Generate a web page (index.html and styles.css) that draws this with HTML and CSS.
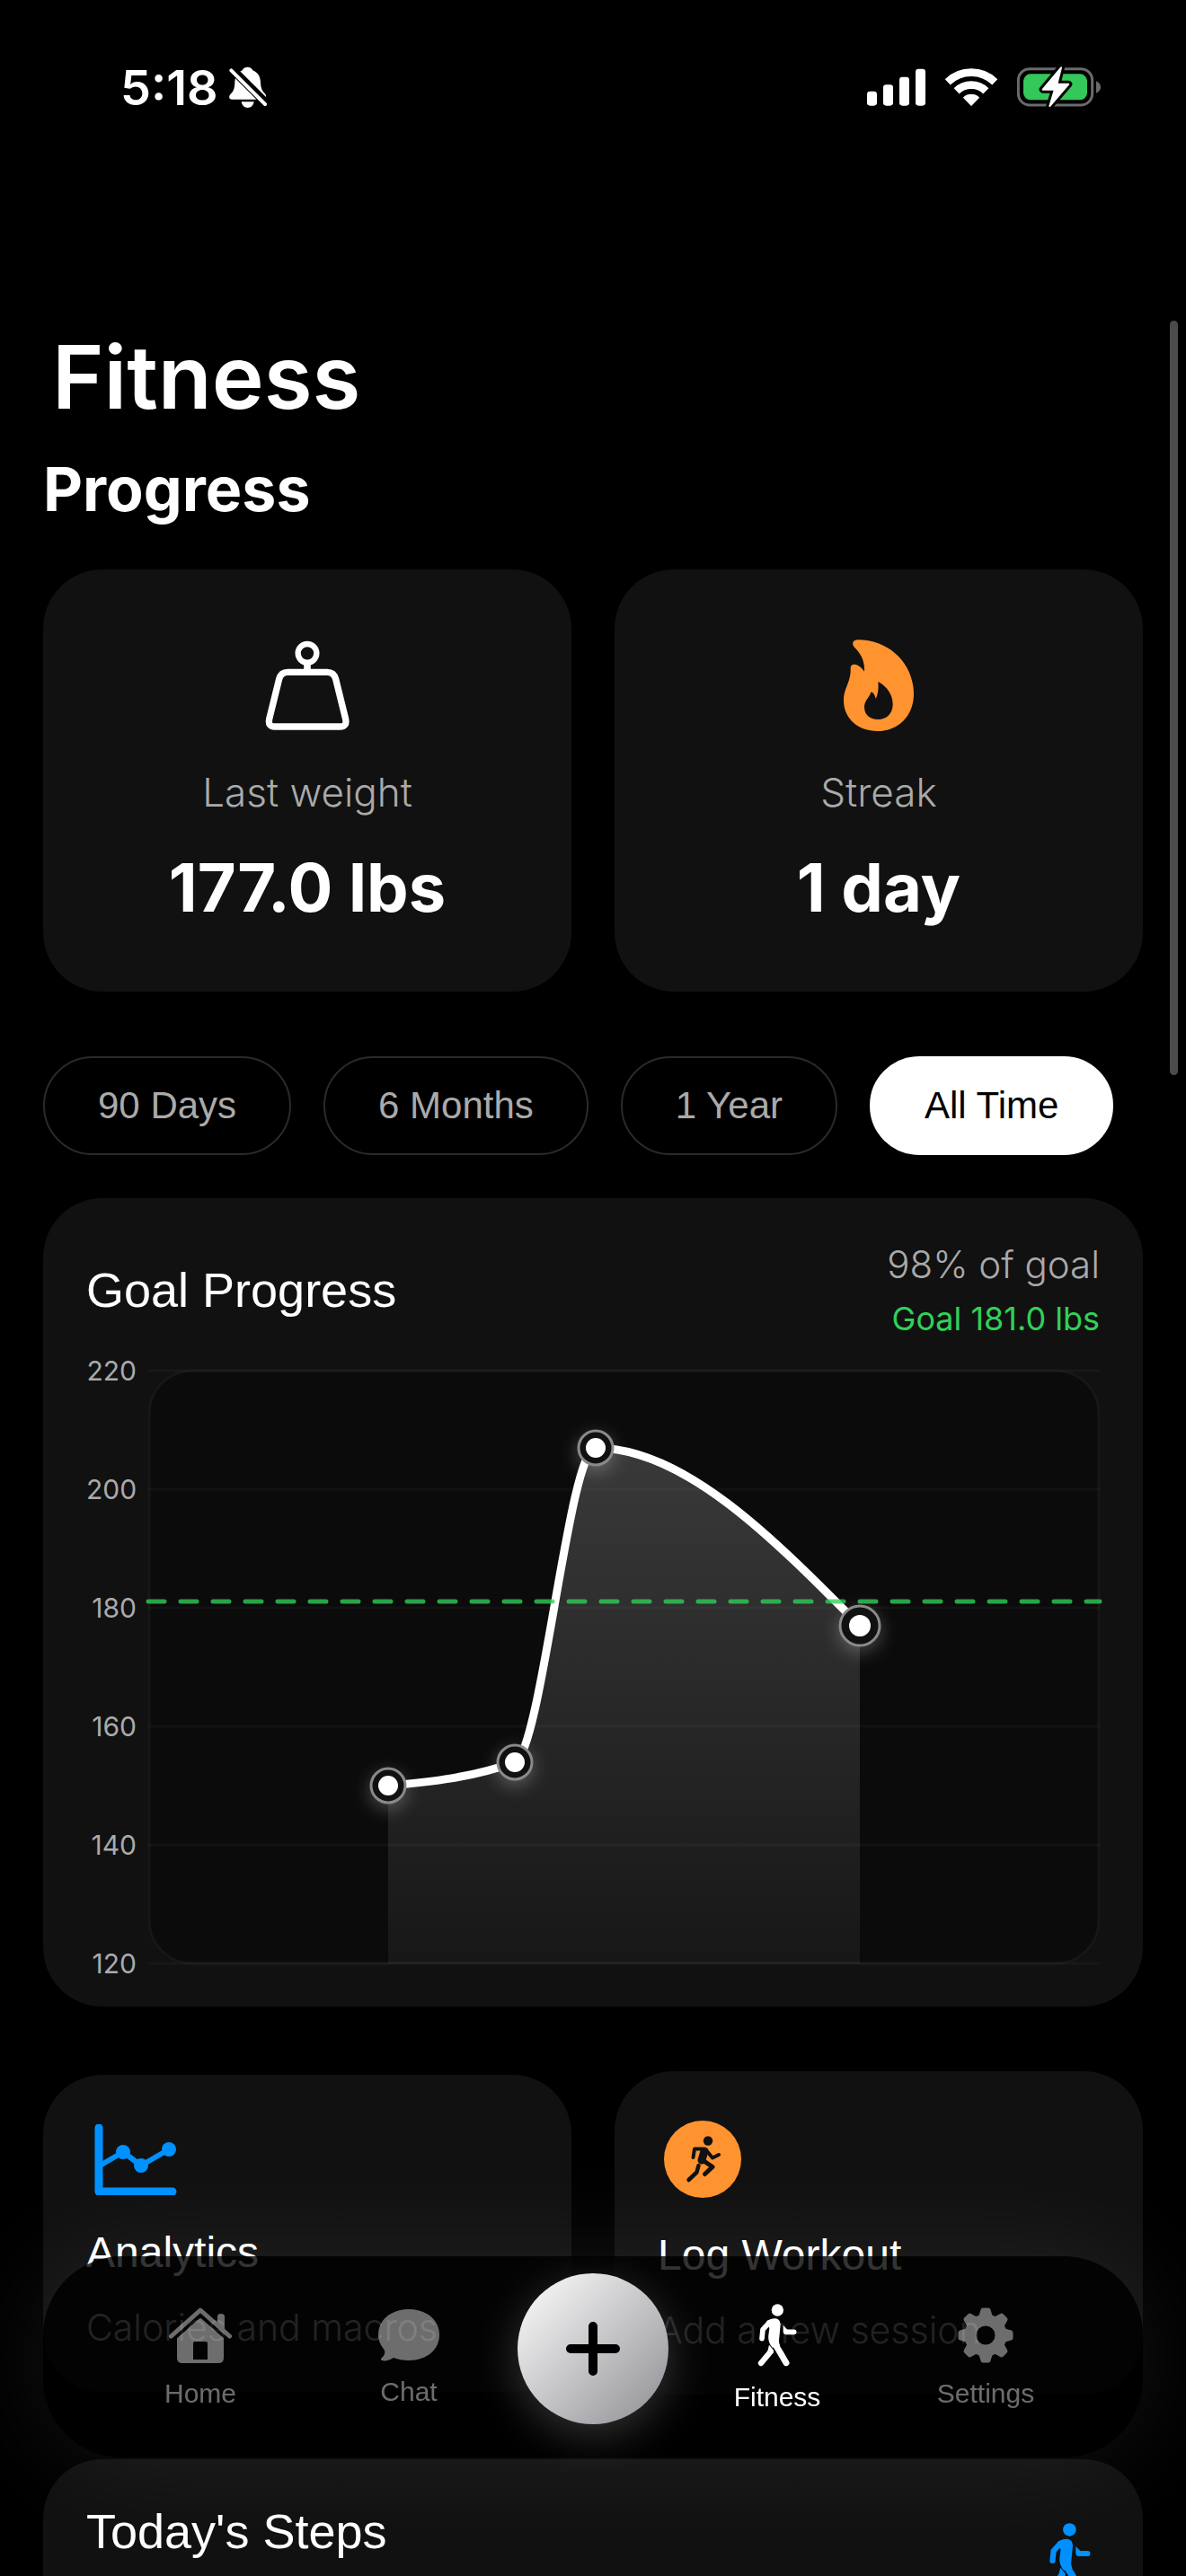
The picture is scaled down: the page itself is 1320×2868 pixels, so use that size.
FILE: index.html
```html
<!DOCTYPE html>
<html lang="en">
<head>
    <meta charset="UTF-8">
    <meta name="viewport" content="width=device-width, initial-scale=1.0">
    <title>Fitness</title>
    <link rel="stylesheet" href="styles.css">
</head>
<body>
    <svg class="sprite" aria-hidden="true">
        <symbol id="walk" viewBox="370 74 132 210">
            <g fill="none" stroke="currentColor" stroke-linecap="round" stroke-linejoin="round">
                <path d="M408 138L388 160L385 190" stroke-width="17"/>
                <path d="M427 206L442 230L466 271" stroke-width="21"/>
                <path d="M414 234L382 272" stroke-width="19"/>
                <path d="M467 168H492" stroke-width="17"/>
            </g>
            <path d="M400 133C414 122 446 114 447 144L442 196Q441 204 446 214L420 220Q404 202 407 178L410 156Z" fill="currentColor"/>
            <path d="M409 211L424 229L422 240L404 232Z" fill="currentColor"/>
            <path d="M456 146L470 160L466 177Q455 175 456 164Z" fill="currentColor"/>
            <circle cx="437" cy="95" r="20" fill="currentColor"/>
        </symbol>
    </svg>

    <div class="status-bar">
        <div class="status-left">
            <span class="time">5:18</span>
            <svg width="42" height="46" viewBox="404 105 126 138">
                <path d="M465 107C474 107 481 112 483 118C500 125 508 138 509 158C510 180 515 186 524 196C531 206 526 215 516 215H414C403 215 402 205 408 198C419 187 422 180 423 158C424 138 432 125 448 118C450 112 457 107 465 107Z" fill="#fff"/>
                <path d="M445 223H487C485 236 476 243 466 243C456 243 447 236 445 223Z" fill="#fff"/>
                <path d="M408 108L532 232" stroke="#000" stroke-width="28"/>
                <path d="M411 118L524 231" stroke="#fff" stroke-width="12" stroke-linecap="round"/>
            </svg>
        </div>
        <div class="status-right">
            <svg width="65" height="42" viewBox="192 106 195 126" fill="#fff">
                <rect x="192" y="183" width="33" height="48" rx="10"/>
                <rect x="246" y="161" width="33" height="70" rx="10"/>
                <rect x="300" y="135" width="33" height="96" rx="10"/>
                <rect x="354" y="108" width="33" height="123" rx="10"/>
            </svg>
            <svg width="58" height="42" viewBox="454 106 174 126">
                <g fill="none" stroke="#fff" stroke-width="26">
                    <path d="M462 152A113 113 0 0 1 620 152"/>
                    <path d="M492 182A70 70 0 0 1 590 182"/>
                </g>
                <path d="M541 229L517 204A36 36 0 0 1 565 204Z" fill="#fff" stroke="#fff" stroke-width="5" stroke-linejoin="round"/>
            </svg>
            <svg width="93" height="46" viewBox="696 101 279 138">
                <rect x="700" y="109" width="247" height="121" rx="38" fill="none" stroke="#6b6b6b" stroke-width="9"/>
                <rect x="717" y="126" width="213" height="87" rx="24" fill="#34c759"/>
                <path d="M960 150C980 158 980 182 960 190Z" fill="#6b6b6b"/>
                <path d="M843 105L782 178H822L805 233L868 160H829Z" fill="#fff" stroke="#000" stroke-width="24" stroke-linejoin="round" paint-order="stroke"/>
                <path d="M843 105L782 178H822L805 233L868 160H829Z" fill="#fff" stroke="#fff" stroke-width="6" stroke-linejoin="round"/>
            </svg>
        </div>
    </div>

    <main class="page">
        <h1>Fitness</h1>
        <h2>Progress</h2>

        <section class="stats">
            <div class="card stat">
                <svg width="120" height="120" viewBox="6 0 360 360" fill="none" stroke="#fff">
                    <circle cx="186" cy="82" r="31" stroke-width="19"/>
                    <path d="M186 116V142" stroke-width="23"/>
                    <path d="M121 145H252Q275 145 281 168L314 302Q319 327 296 327H77Q54 327 59 302L92 168Q98 145 121 145Z" stroke-width="22"/>
                </svg>
                <p class="stat-label">Last weight</p>
                <p class="stat-value">177.0 lbs</p>
            </div>
            <div class="card stat">
                <svg width="120" height="120" viewBox="-6 0 360 360">
                    <path d="M103 37C210 36 291 118 291 218C291 292 238 342 170 342C106 342 57 300 57 240C57 195 82 180 80 132C80 112 108 116 126 143C128 106 112 80 93 62C82 50 88 38 103 37Z" fill="#ff9330"/>
                    <path d="M172 177C202 192 221 222 221 252C221 284 200 303 172 303C144 303 126 287 126 262C126 240 142 231 149 211C156 214 162 223 164 234C172 219 174 198 172 177Z" fill="#111"/>
                </svg>
                <p class="stat-label">Streak</p>
                <p class="stat-value">1 day</p>
            </div>
        </section>

        <div class="ranges">
            <button>90 Days</button>
            <button>6 Months</button>
            <button>1 Year</button>
            <button class="active">All Time</button>
        </div>

        <section class="card goal">
            <div class="goal-header">
                <h3>Goal Progress</h3>
                <div class="goal-info">
                    <p class="goal-percent">98% of goal</p>
                    <p class="goal-target">Goal 181.0 lbs</p>
                </div>
            </div>
            <div class="chart">
                <div class="axis">
                    <span>220</span>
                    <span>200</span>
                    <span>180</span>
                    <span>160</span>
                    <span>140</span>
                    <span>120</span>
                </div>
                <!-- 6.6 units per pound, 120 lbs at the bottom -->
                <svg class="plot" viewBox="0 0 1059 660">
                    <defs>
                        <linearGradient id="area" x1="0" y1="0" x2="0" y2="1">
                            <stop offset="0" stop-color="#fff" stop-opacity=".19"/>
                            <stop offset="1" stop-color="#fff" stop-opacity=".05"/>
                        </linearGradient>
                    </defs>
                    <rect class="plot-bg" x="1" y="0" width="1057" height="660" rx="48"/>
                    <path class="grid" d="M0 0H1059M0 132H1059M0 264H1059M0 396H1059M0 528H1059M0 660H1059"/>
                    <path d="M267 462C314 458 361 453 408 436C438 424 468 86 498 86C596 86 694 185 792 284V660H267Z" fill="url(#area)"/>
                    <path class="line" d="M267 462C314 458 361 453 408 436C438 424 468 86 498 86C596 86 694 185 792 284"/>
                    <path class="goal-line" d="M0 257H1059"/>
                    <g class="points">
                        <circle class="ring" cx="267" cy="462" r="19"/>
                        <circle class="ring" cx="408" cy="436" r="19"/>
                        <circle class="ring" cx="498" cy="86" r="19"/>
                        <circle class="ring" cx="792" cy="284" r="22"/>
                    </g>
                    <g fill="#fff">
                        <circle cx="267" cy="462" r="11"/>
                        <circle cx="408" cy="436" r="11"/>
                        <circle cx="498" cy="86" r="11"/>
                        <circle cx="792" cy="284" r="12"/>
                    </g>
                </svg>
            </div>
        </section>

        <section class="actions">
            <div class="card action">
                <svg width="104" height="79" viewBox="0 0 104 79">
                    <g fill="none" stroke="#0091ff" stroke-linecap="round" stroke-linejoin="round">
                        <path d="M14 4V75H96" stroke-width="9"/>
                        <path d="M17 45L41 31L61 46L92 28" stroke-width="6"/>
                    </g>
                    <g fill="#0091ff">
                        <circle cx="41" cy="31" r="8"/>
                        <circle cx="61" cy="46" r="8"/>
                        <circle cx="92" cy="28" r="8"/>
                    </g>
                </svg>
                <h4>Analytics</h4>
                <p>Calories and macros</p>
            </div>
            <div class="card action">
                <svg width="100" height="86" viewBox="-7 0 100 86">
                    <circle cx="43" cy="43" r="43" fill="#ff9330"/>
                    <g fill="none" stroke="#111" stroke-linecap="round" stroke-linejoin="round">
                        <path d="M43 31.500H34L32.500 41" stroke-width="4"/>
                        <path d="M47 33L54 41.500L61 38" stroke-width="4"/>
                        <path d="M45 34L42 44" stroke-width="9"/>
                        <path d="M43 44L54 51.500L45.500 59.500" stroke-width="5"/>
                        <path d="M38.500 50L36.500 57.500L27.500 66" stroke-width="4.500"/>
                    </g>
                    <circle cx="49" cy="22.500" r="5.200" fill="#111"/>
                </svg>
                <h4>Log Workout</h4>
                <p>Add a new session</p>
            </div>
        </section>

        <section class="card steps">
            <h3>Today's Steps</h3>
            <svg class="steps-icon" width="48" height="78"><use href="#walk"/></svg>
        </section>
    </main>

    <div class="scroll-indicator"></div>

    <nav class="tab-bar">
        <a class="tab" href="#">
            <svg width="70" height="62" viewBox="0 0 70 62">
                <path d="M2.500 32L35 3L67.500 32" fill="none" stroke="currentColor" stroke-width="5" stroke-linecap="round" stroke-linejoin="round"/>
                <path d="M54 18V10Q54 7 58 7Q62 7 62 10V25Z" fill="currentColor"/>
                <path fill-rule="evenodd" d="M9 34L33 13Q35 11 37 13L61 34V56Q61 62 55 62H15Q9 62 9 56ZM29 38Q27 38 27 40V58H43V40Q43 38 41 38Z" fill="currentColor"/>
                <path d="M7 34L35 9L63 34" fill="none" stroke="#050505" stroke-width="3"/>
            </svg>
            <span>Home</span>
        </a>
        <a class="tab" href="#">
            <svg width="68" height="58" viewBox="0 0 68 58">
                <path d="M34 0C54 0 68 12 68 28.500C68 45 54 57 34 57C28 57 22 56 17 54C12 57 8 58 4 57C2 56 3 55 5 53C8 49 8 46 5 43C2 39 0 34 0 28.500C0 12 14 0 34 0Z" fill="currentColor"/>
            </svg>
            <span>Chat</span>
        </a>
        <button class="add" aria-label="Add">
            <svg width="60" height="60" viewBox="0 0 60 60">
                <path d="M30 5V55M5 30H55" stroke="#000" stroke-width="10" stroke-linecap="round"/>
            </svg>
        </button>
        <a class="tab active" href="#">
            <svg width="44" height="70"><use href="#walk"/></svg>
            <span>Fitness</span>
        </a>
        <a class="tab" href="#">
            <svg width="62" height="62" viewBox="-31 -31 62 62">
                <defs>
                    <path id="tooth" d="M-8 -20L-5.500 -28.500Q-5 -30.500 -3 -30.500H3Q5 -30.500 5.500 -28.500L8 -20Z"/>
                </defs>
                <g fill="currentColor">
                    <use href="#tooth"/>
                    <use href="#tooth" transform="rotate(45)"/>
                    <use href="#tooth" transform="rotate(90)"/>
                    <use href="#tooth" transform="rotate(135)"/>
                    <use href="#tooth" transform="rotate(180)"/>
                    <use href="#tooth" transform="rotate(225)"/>
                    <use href="#tooth" transform="rotate(270)"/>
                    <use href="#tooth" transform="rotate(315)"/>
                </g>
                <circle r="17" fill="none" stroke="currentColor" stroke-width="13"/>
            </svg>
            <span>Settings</span>
        </a>
    </nav>
</body>
</html>
```
FILE: styles.css
```css
* {
    box-sizing: border-box;
    margin: 0;
    padding: 0;
}
html {
    background: #000;
}
body {
    height: 100vh;
    overflow: hidden;
    background: #000;
    color: #fff;
    font-family: "Liberation Sans", Arial, sans-serif;
}
svg {
    display: block;
    flex-shrink: 0;
}
h3, h4 {
    font-weight: normal;
}
.sprite {
    position: absolute;
    width: 0;
    height: 0;
}

/* status bar */
.status-bar {
    display: flex;
    justify-content: space-between;
    align-items: center;
    height: 194px;
    padding: 0 95px 0 134px;
}
.status-left {
    display: flex;
    align-items: center;
    gap: 12px;
}
.status-right {
    display: flex;
    align-items: center;
    gap: 22px;
}
.time {
    font-family: Inter, sans-serif;
    font-size: 54px;
    font-weight: 600;
}

/* content */
.page {
    padding: 166px 48px 0;
}
h1 {
    padding-left: 10px;
    font-family: Inter, sans-serif;
    font-size: 98px;
    font-weight: 600;
    line-height: 120px;
}
h2 {
    margin: 24px 0 50px;
    font-family: Inter, sans-serif;
    font-size: 68px;
    font-weight: 700;
    line-height: 80px;
}
.card {
    background: #111;
    border-radius: 66px;
}
.stats {
    display: grid;
    grid-template-columns: 1fr 1fr;
    gap: 48px;
}
.stat {
    display: flex;
    flex-direction: column;
    align-items: center;
    height: 470px;
    padding-top: 66px;
    font-family: Inter, sans-serif;
}
.stat-label {
    margin: 37px 0 39px;
    color: #aaa;
    font-size: 44px;
    font-weight: 300;
    line-height: 50px;
}
.stat-value {
    font-size: 74px;
    font-weight: 700;
    line-height: 84px;
}
.ranges {
    display: flex;
    gap: 36px;
    margin: 72px 0 48px;
}
.ranges button {
    height: 110px;
    padding: 0 59px;
    border: 2px solid #2a2a2a;
    border-radius: 55px;
    background: #000;
    color: #aaa;
    font-family: inherit;
    font-size: 42px;
}
.ranges .active {
    border-color: #fff;
    background: #fff;
    color: #000;
}

/* goal chart */
.goal {
    padding: 48px;
}
.goal-header {
    display: flex;
    justify-content: space-between;
    align-items: center;
    margin-bottom: 36px;
}
.goal-header h3, .steps h3 {
    font-size: 54px;
    line-height: 64px;
}
.goal-info {
    font-family: Inter, sans-serif;
    text-align: right;
}
.goal-percent {
    margin-bottom: 12px;
    color: #aaa;
    font-size: 42px;
    font-weight: 300;
    line-height: 52px;
}
.goal-target {
    color: #30d158;
    font-size: 36px;
    line-height: 44px;
}
.chart {
    display: flex;
    gap: 13px;
}
.axis {
    display: flex;
    flex-direction: column;
    justify-content: space-between;
    width: 56px;
    margin: -18px 0;
    color: #aaa;
    font-family: Inter, sans-serif;
    font-size: 30px;
    line-height: 36px;
    text-align: right;
}
.plot {
    flex: 1;
    min-width: 0;
    overflow: visible;
}
.plot-bg {
    fill: #0b0b0b;
    stroke: #171717;
    stroke-width: 3;
}
.grid {
    stroke: #fff;
    stroke-opacity: .03;
    stroke-width: 3;
}
.line {
    fill: none;
    stroke: #fff;
    stroke-width: 9;
}
.goal-line {
    stroke: #30d158;
    stroke-opacity: .78;
    stroke-width: 5;
    stroke-linecap: round;
    stroke-dasharray: 18 18;
}
.ring {
    fill: #111;
    stroke: #8a8a8a;
    stroke-width: 3;
    filter: drop-shadow(0 6px 10px rgba(255, 255, 255, .25));
}

/* action cards */
.actions {
    display: grid;
    grid-template-columns: 1fr 1fr;
    align-items: center;
    gap: 48px;
    margin: 72px 0;
}
.action {
    padding: 55px 48px 48px;
}
.action h4 {
    margin: 36px 0 31px;
    font-size: 48px;
    line-height: 56px;
}
.action p {
    color: #aaa;
    font-family: Inter, sans-serif;
    font-size: 41px;
    font-weight: 300;
    line-height: 48px;
}
.steps {
    display: flex;
    justify-content: space-between;
    padding: 48px 58px 48px 48px;
}
.steps-icon {
    margin-top: 22px;
    color: #0091ff;
}
.scroll-indicator {
    position: fixed;
    top: 357px;
    right: 9px;
    width: 9px;
    height: 840px;
    border-radius: 5px;
    background: #4b4b4b;
}

/* tab bar */
.tab-bar {
    position: fixed;
    right: 48px;
    bottom: 132px;
    left: 48px;
    display: flex;
    align-items: center;
    height: 224px;
    padding: 0 59px;
    border-radius: 88px;
    background: rgba(0, 0, 0, .8);
    box-shadow: 0 0 120px rgba(255, 255, 255, .08);
}
.tab {
    display: flex;
    flex: 1;
    flex-direction: column;
    align-items: center;
    gap: 18px;
    padding-top: 2px;
    color: #fff;
    font-size: 30px;
    line-height: 32px;
    text-decoration: none;
    opacity: .42;
}
.tab.active {
    opacity: 1;
}
.add {
    display: flex;
    justify-content: center;
    align-items: center;
    width: 168px;
    height: 168px;
    margin: 0 5px 18px;
    border: none;
    border-radius: 50%;
    background: linear-gradient(135deg, #fff, #8e8e93);
    box-shadow: 0 12px 48px rgba(255, 255, 255, .2);
}
```
